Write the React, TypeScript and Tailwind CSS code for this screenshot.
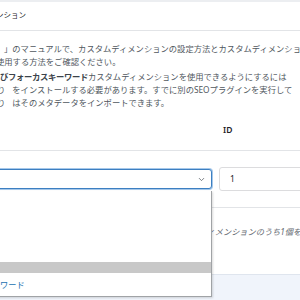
import { ChevronDown } from "lucide-react";

export default function App() {
    return (
        <div className="relative h-[300px] w-[300px] overflow-hidden bg-white font-['Noto_Sans','Noto_Sans_CJK_JP',sans-serif] text-[#50575e]">
            <div className="h-[2px] bg-[#eceef1]" />
            <div className="flex h-[29px] items-center border-b border-[#e2e4e7] text-[7.5px] text-[#1d2327]">
                <span className="ml-[-4px] whitespace-nowrap">ンション</span>
            </div>

            <div className="pt-[11px] text-[8.3px] leading-[13px]">
                <div className="whitespace-nowrap">
                    <span className="ml-[4px]">」</span>
                    のマニュアルで、カスタムディメンションの設定方法とカスタムディメンション
                </div>
                <div className="ml-[-4px] whitespace-nowrap">
                    使用する方法をご確認ください。
                </div>
                <div className="mt-[2px] whitespace-nowrap">
                    <span className="font-bold tracking-[-0.3px] text-[#3c434a]">
                        びフォーカスキーワード
                    </span>
                    カスタムディメンションを使用できるようにするには
                </div>
                <div className="whitespace-nowrap">
                    <span className="ml-[-3px]">り</span>
                    <span className="ml-[7px]">
                        をインストールする必要があります。すでに別のSEOプラグインを実行して
                    </span>
                </div>
                <div className="whitespace-nowrap">
                    <span className="ml-[-3px]">り</span>
                    <span className="ml-[7px]">
                        はそのメタデータをインポートできます。
                    </span>
                </div>
            </div>

            <div className="grid h-[42px] grid-cols-[219px_1fr] items-center border-b border-[#e2e4e7]">
                <div />
                <div className="pl-[4px] pt-[2px] text-[8.5px] font-semibold text-[#1d2327]">
                    ID
                </div>
            </div>

            <div className="grid h-[57px] grid-cols-[219px_1fr] items-center border-b border-[#e2e4e7]">
                <div className="ml-[-6px] mr-[7px] flex h-[20px] items-center justify-end rounded-[3px] border border-[#3c7fc1] bg-white pr-[5px] shadow-[0_0_0_1px_#a6c8ea]">
                    <ChevronDown className="h-[9px] w-[9px] text-[#50575e]" strokeWidth={2} />
                </div>
                <div className="mr-[-6px] flex h-[24px] items-center rounded-[3px] border border-[#dcdcde] bg-white pl-[10px] text-[8.5px] text-[#1d2327]">
                    1
                </div>
            </div>

            <div className="h-[66px] pt-[17px] text-[8.2px] italic leading-[13px] text-[#646970]">
                <div className="ml-[199px] whitespace-nowrap">
                    ディメンションのうち1個を選択してください
                </div>
            </div>

            <div className="h-[30px] border-t border-[#dfe5ee] bg-[#f0f4fb]" />

            <div className="absolute left-[-6px] top-[191px] h-[106px] w-[218px] border-b border-r border-[#a0a3a6] bg-white shadow-[1px_1px_2px_rgba(0,0,0,0.15)]">
                <div className="mt-[71px] h-[11px] bg-[#c8c8c8]" />
                <div className="mt-[5px] pl-[6px] text-[8.2px] leading-[13px] text-[#2271b1]">
                    ワード
                </div>
            </div>
        </div>
    );
}
